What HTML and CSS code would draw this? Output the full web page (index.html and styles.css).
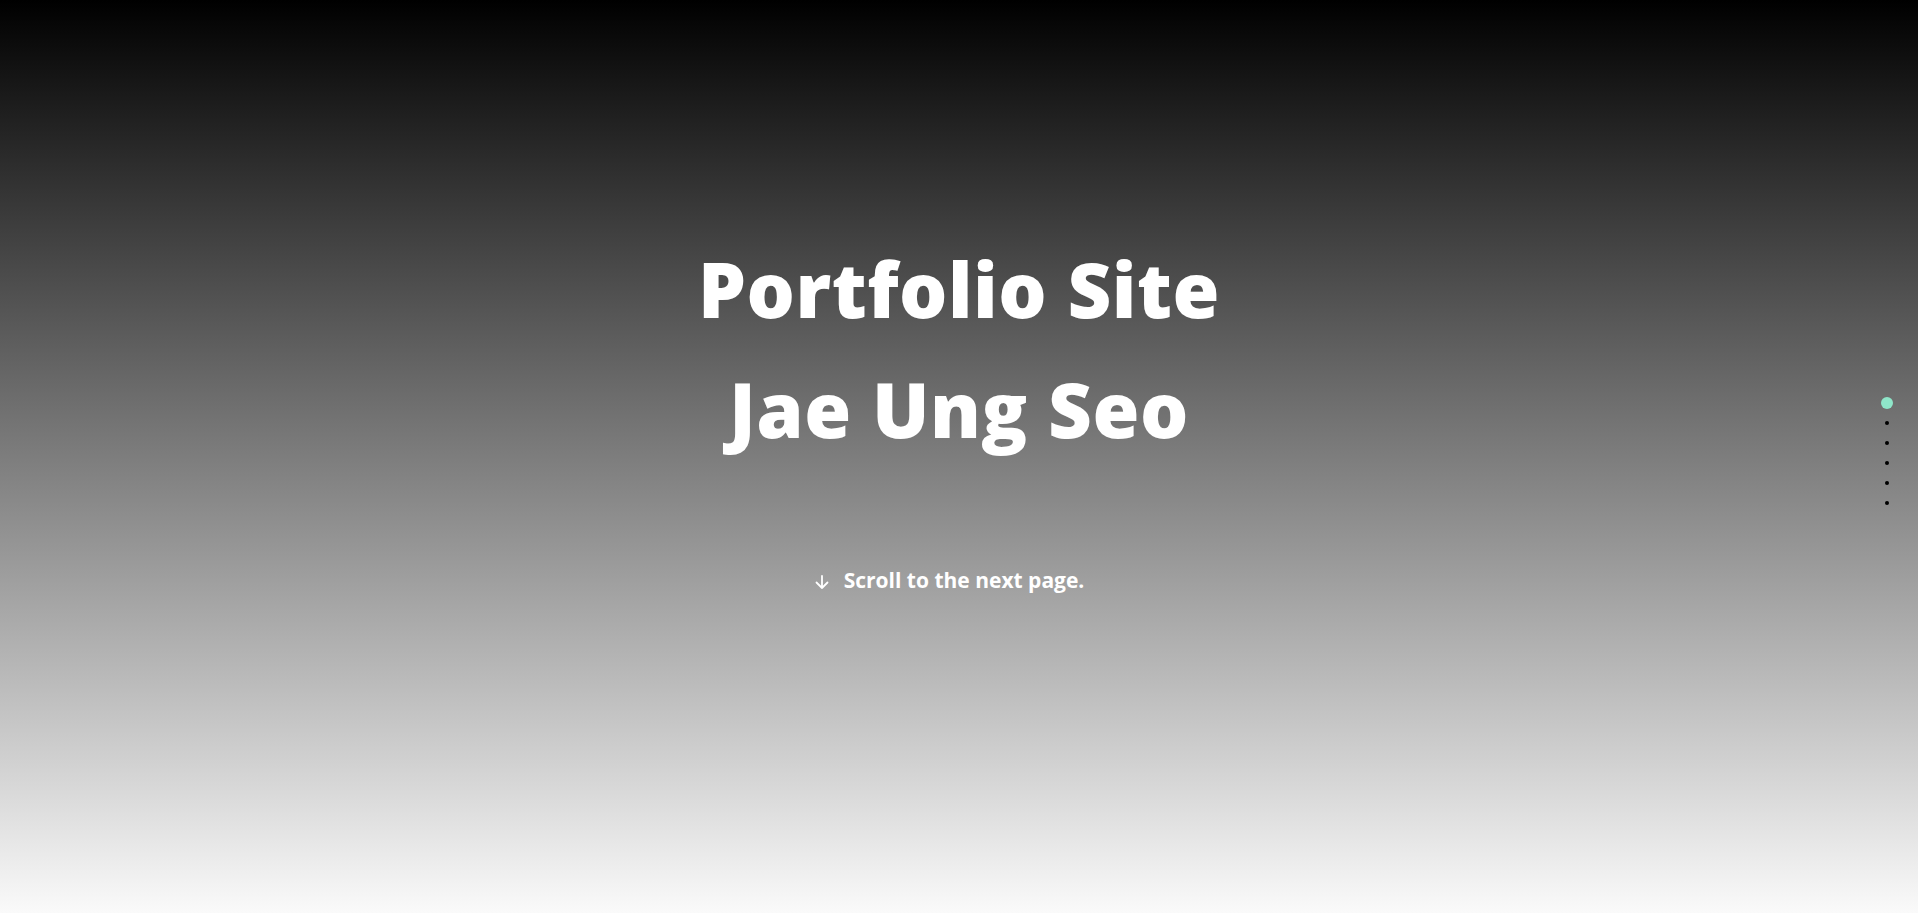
FILE: index.html
```html
<!DOCTYPE html>
<html lang="en">
<head>
    <meta charset="UTF-8">
    <meta name="viewport" content="width=device-width, initial-scale=1.0">
    <title>Portfolio Site</title>
    <link rel="stylesheet" href="styles.css">
</head>
<body>

<section class="intro" id="intro">
    <div class="intro-content">
        <h1 class="intro-title">Portfolio Site</h1>
        <h1 class="intro-title">Jae Ung Seo</h1>
        <p class="scroll-hint">
            <svg class="scroll-arrow" width="16" height="16" viewBox="0 0 16 16">
                <path d="M8 2 V14 M2.5 8.5 L8 14 L13.5 8.5" fill="none" stroke="#fff" stroke-width="1.8" stroke-linecap="round" stroke-linejoin="round"/>
            </svg>
            Scroll to the next page.
        </p>
    </div>
</section>

<nav class="page-dots">
    <a href="#intro" class="dot active"></a>
    <a href="#about" class="dot"></a>
    <a href="#skills" class="dot"></a>
    <a href="#projects" class="dot"></a>
    <a href="#career" class="dot"></a>
    <a href="#contact" class="dot"></a>
</nav>

</body>
</html>
```

FILE: styles.css
```css
html, body {
    margin: 0;
    padding: 0;
    height: 100%;
}

body {
    font-family: "Open Sans", Arial, sans-serif;
    color: #fff;
    overflow: hidden;
}

.intro {
    height: 100vh;
    background: linear-gradient(to bottom, #000 0%, #fafafa 100%);
    display: flex;
    justify-content: center;
    align-items: flex-start;
}

.intro-content {
    display: flex;
    flex-direction: column;
    align-items: center;
    padding-top: 229px;
}

.intro-title {
    margin: 0;
    font-size: 76px;
    font-weight: 800;
    line-height: 120px;
    letter-spacing: 0.5px;
}

.scroll-hint {
    margin: 97px 0 0;
    padding-right: 20px;
    display: flex;
    align-items: center;
    gap: 14px;
    font-size: 21px;
    font-weight: 700;
}

.scroll-arrow {
    margin-top: 3px;
}

.page-dots {
    position: fixed;
    right: 25px;
    top: 397px;
    display: flex;
    flex-direction: column;
    align-items: center;
    gap: 16px;
}

.dot {
    display: block;
    width: 4px;
    height: 4px;
    border-radius: 50%;
    background: #000;
}

.dot.active {
    width: 12px;
    height: 12px;
    background: #8fe6c9;
    margin-bottom: -4px;
}
```
